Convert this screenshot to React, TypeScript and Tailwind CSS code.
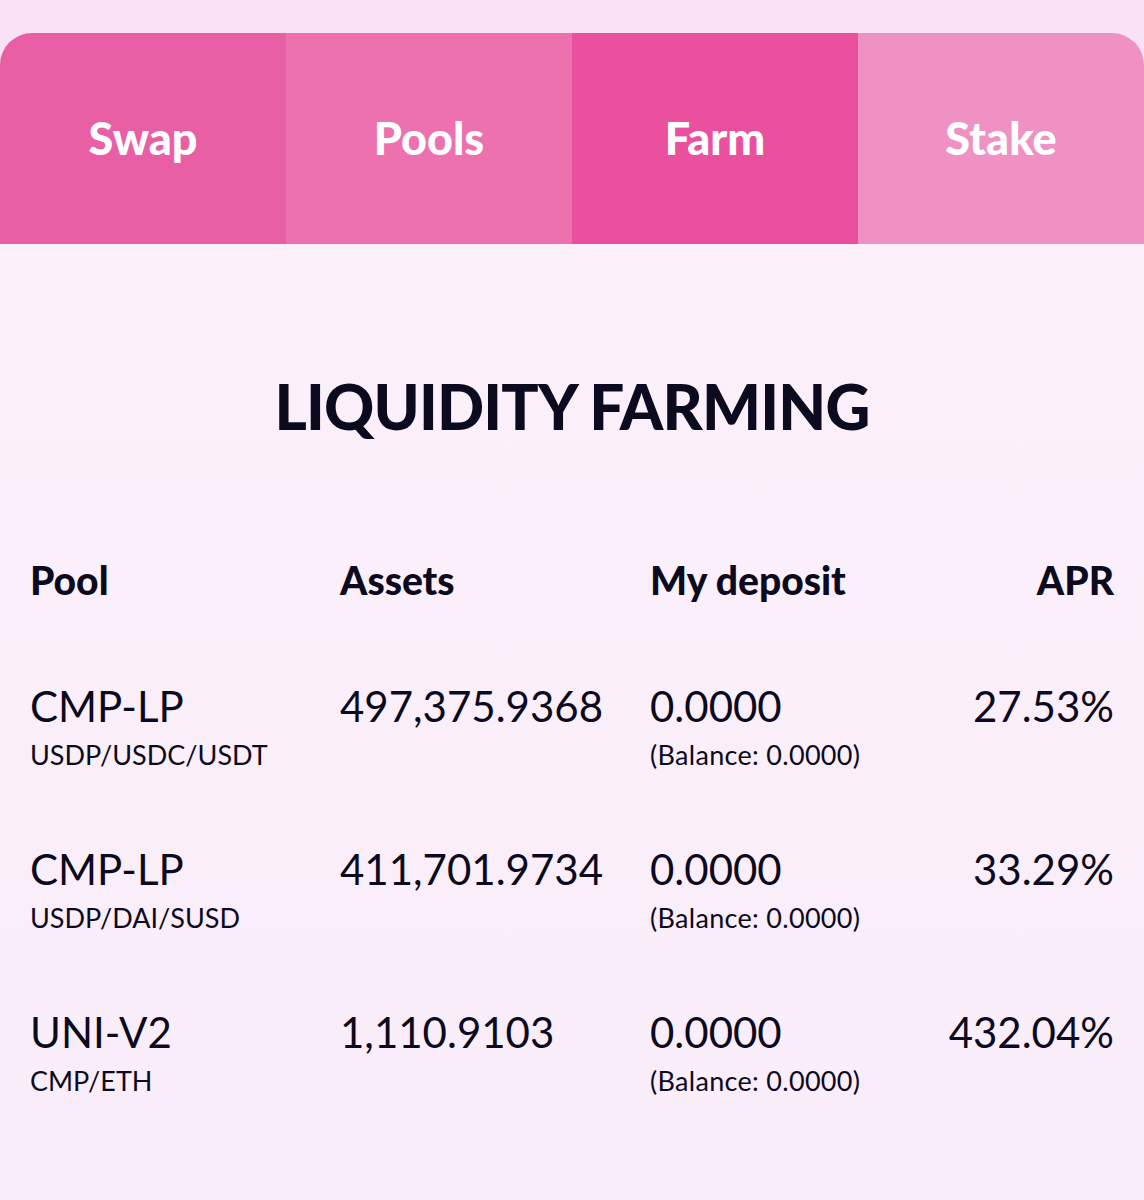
const tabs = [
  { label: 'Swap', bg: 'bg-[#e95fa5]' },
  { label: 'Pools', bg: 'bg-[#ed71ae]' },
  { label: 'Farm', bg: 'bg-[#eb509f]' },
  { label: 'Stake', bg: 'bg-[#ef92c3]' },
];

const rows = [
  { pool: 'CMP-LP', pair: 'USDP/USDC/USDT', assets: '497,375.9368', deposit: '0.0000', balance: '0.0000', apr: '27.53%' },
  { pool: 'CMP-LP', pair: 'USDP/DAI/SUSD', assets: '411,701.9734', deposit: '0.0000', balance: '0.0000', apr: '33.29%' },
  { pool: 'UNI-V2', pair: 'CMP/ETH', assets: '1,110.9103', deposit: '0.0000', balance: '0.0000', apr: '432.04%' },
];

export default function App() {
  return (
    <div
      className="min-h-[1200px] bg-[#fae2f6] pt-[33px] text-[#0c0a1e]"
      style={{ fontFamily: 'Lato, "Noto Sans", sans-serif' }}
    >
      <div className="min-h-[1167px] overflow-hidden rounded-t-[32px] bg-gradient-to-b from-[#fcf1fb] to-[#f9edf9]">
        {/* Tabs */}
        <div className="grid h-[211px] grid-cols-4">
          {tabs.map((t) => (
            <div
              key={t.label}
              className={`flex items-center justify-center text-[45px] font-black text-white ${t.bg}`}
            >
              {t.label}
            </div>
          ))}
        </div>

        <h1 className="pt-[131px] text-center text-[62px] font-black leading-[1] tracking-[-0.8px]">
          LIQUIDITY FARMING
        </h1>

        {/* Table */}
        <div className="px-[30px] pt-[124px]">
          <div className="grid grid-cols-[310px_310px_1fr_auto] text-[39px] font-black leading-[1]">
            <div>Pool</div>
            <div>Assets</div>
            <div>My deposit</div>
            <div className="text-right">APR</div>
          </div>

          <div className="mt-[85px] flex flex-col gap-[80px]">
            {rows.map((r, i) => (
              <div key={i} className="grid grid-cols-[310px_310px_1fr_auto] leading-[1]">
                <div>
                  <div className="text-[42px]">{r.pool}</div>
                  <div className="mt-[14px] text-[27px]">{r.pair}</div>
                </div>
                <div className="text-[42px]">{r.assets}</div>
                <div>
                  <div className="text-[42px]">{r.deposit}</div>
                  <div className="mt-[14px] text-[27px] tracking-[0.3px]">(Balance: {r.balance})</div>
                </div>
                <div className="text-right text-[42px]">{r.apr}</div>
              </div>
            ))}
          </div>
        </div>
      </div>
    </div>
  );
}
